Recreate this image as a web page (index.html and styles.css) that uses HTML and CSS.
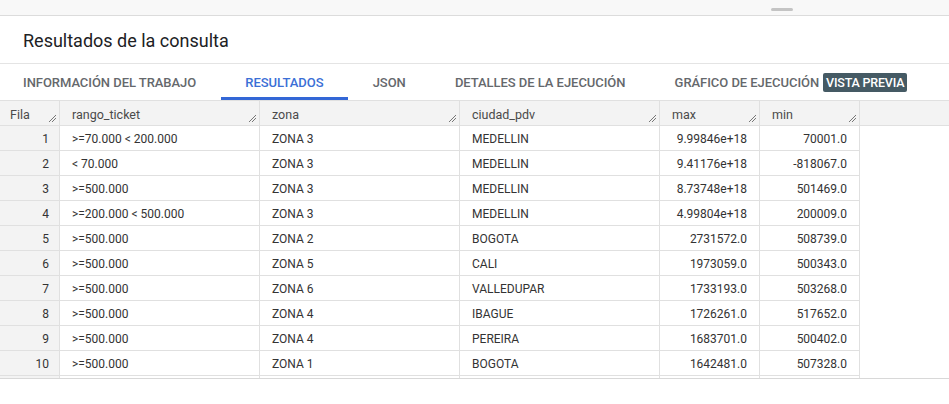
FILE: index.html
```html
<!DOCTYPE html>
<html lang="es">
<head>
<meta charset="utf-8">
<title>Resultados de la consulta</title>
<link rel="stylesheet" href="styles.css">
</head>
<body>
<div class="topbar"><span class="handle"></span></div>
<h1 class="title">Resultados de la consulta</h1>
<nav class="tabs">
  <span class="tab">INFORMACIÓN DEL TRABAJO</span>
  <span class="tab active">RESULTADOS</span>
  <span class="tab">JSON</span>
  <span class="tab">DETALLES DE LA EJECUCIÓN</span>
  <span class="tab">GRÁFICO DE EJECUCIÓN <span class="badge">VISTA PREVIA</span></span>
</nav>
<div class="grid">
  <div class="row head">
    <div class="c num">Fila</div>
    <div class="c w200">rango_ticket</div>
    <div class="c w200">zona</div>
    <div class="c w200">ciudad_pdv</div>
    <div class="c w100">max</div>
    <div class="c w100">min</div>
    <div class="c fill"></div>
  </div>
  <div class="row"><div class="c num">1</div><div class="c w200">&gt;=70.000 &lt; 200.000</div><div class="c w200">ZONA 3</div><div class="c w200">MEDELLIN</div><div class="c w100 r">9.99846e+18</div><div class="c w100 r">70001.0</div><div class="c fill"></div></div>
  <div class="row"><div class="c num">2</div><div class="c w200">&lt; 70.000</div><div class="c w200">ZONA 3</div><div class="c w200">MEDELLIN</div><div class="c w100 r">9.41176e+18</div><div class="c w100 r">-818067.0</div><div class="c fill"></div></div>
  <div class="row"><div class="c num">3</div><div class="c w200">&gt;=500.000</div><div class="c w200">ZONA 3</div><div class="c w200">MEDELLIN</div><div class="c w100 r">8.73748e+18</div><div class="c w100 r">501469.0</div><div class="c fill"></div></div>
  <div class="row"><div class="c num">4</div><div class="c w200">&gt;=200.000 &lt; 500.000</div><div class="c w200">ZONA 3</div><div class="c w200">MEDELLIN</div><div class="c w100 r">4.99804e+18</div><div class="c w100 r">200009.0</div><div class="c fill"></div></div>
  <div class="row"><div class="c num">5</div><div class="c w200">&gt;=500.000</div><div class="c w200">ZONA 2</div><div class="c w200">BOGOTA</div><div class="c w100 r">2731572.0</div><div class="c w100 r">508739.0</div><div class="c fill"></div></div>
  <div class="row"><div class="c num">6</div><div class="c w200">&gt;=500.000</div><div class="c w200">ZONA 5</div><div class="c w200">CALI</div><div class="c w100 r">1973059.0</div><div class="c w100 r">500343.0</div><div class="c fill"></div></div>
  <div class="row"><div class="c num">7</div><div class="c w200">&gt;=500.000</div><div class="c w200">ZONA 6</div><div class="c w200">VALLEDUPAR</div><div class="c w100 r">1733193.0</div><div class="c w100 r">503268.0</div><div class="c fill"></div></div>
  <div class="row"><div class="c num">8</div><div class="c w200">&gt;=500.000</div><div class="c w200">ZONA 4</div><div class="c w200">IBAGUE</div><div class="c w100 r">1726261.0</div><div class="c w100 r">517652.0</div><div class="c fill"></div></div>
  <div class="row"><div class="c num">9</div><div class="c w200">&gt;=500.000</div><div class="c w200">ZONA 4</div><div class="c w200">PEREIRA</div><div class="c w100 r">1683701.0</div><div class="c w100 r">500402.0</div><div class="c fill"></div></div>
  <div class="row"><div class="c num">10</div><div class="c w200">&gt;=500.000</div><div class="c w200">ZONA 1</div><div class="c w200">BOGOTA</div><div class="c w100 r">1642481.0</div><div class="c w100 r">507328.0</div><div class="c fill"></div></div>
  <div class="row stub"><div class="c num"></div><div class="c w200"></div><div class="c w200"></div><div class="c w200"></div><div class="c w100"></div><div class="c w100"></div><div class="c fill"></div></div>
</div>
</body>
</html>
```

FILE: styles.css
```css
* { box-sizing: border-box; }
html, body { margin: 0; padding: 0; background: #fff; }
body {
  font-family: Roboto, "Liberation Sans", Arial, sans-serif;
  color: #212121;
  width: 949px;
  height: 404px;
  overflow: hidden;
}
.topbar {
  height: 16px;
  background: #f8f8f8;
  border-bottom: 1px solid #dcdcdc;
  position: relative;
}
.handle {
  position: absolute;
  left: 771px;
  top: 8px;
  width: 22px;
  height: 3px;
  border-radius: 2px;
  background: #c4c4c4;
}
.title {
  margin: 0;
  height: 48px;
  padding: 14px 0 0 23px;
  font-size: 18px;
  font-weight: 400;
  color: #202124;
  border-bottom: 1px solid #e4e4e4;
  line-height: 22px;
}
.tabs {
  display: flex;
  height: 37px;
  border-bottom: 1px solid #e0e0e0;
}
.tab {
  display: flex;
  align-items: center;
  padding: 0 24.6px;
  font-size: 13px;
  font-weight: 500;
  color: #65686c;
  letter-spacing: -0.05px;
  border-bottom: 3px solid transparent;
  padding-top: 3px;
}
.tab:first-child { padding-left: 23px; }
.tab.active {
  color: #3b6fd6;
  border-bottom-color: #3367d6;
}
.badge {
  margin-left: 4px;
  background: #455a64;
  color: #fff;
  font-size: 12.5px;
  font-weight: 500;
  padding: 2px 3px;
  border-radius: 2px;
  letter-spacing: -0.2px;
  line-height: 15px;
}
.grid { display: flex; flex-direction: column; }
.row {
  display: flex;
  height: 25px;
  font-size: 12px;
}
.c {
  height: 25px;
  line-height: 26px;
  padding: 0 12px;
  border-right: 1px solid #e0e0e0;
  border-bottom: 1px solid #e0e0e0;
  white-space: nowrap;
  position: relative;
  color: #333;
}
.num {
  width: 60px;
  background: #f3f3f3;
  text-align: right;
  padding-right: 10px;
  color: #333;
}
.w200 { width: 200px; }
.w100 { width: 100px; }
.r { text-align: right; }
.fill { flex: 1; border-right: none; border-bottom: none; }
.head .c {
  background: #f3f3f3;
  color: #4a4a4a;
  font-size: 12.5px;
  line-height: 27px;
}
.head .num { text-align: left; padding-left: 10px; }
.head .fill { border-bottom: 1px solid #e0e0e0; }
.head .c:not(.fill)::after {
  content: "";
  position: absolute;
  right: 3px;
  bottom: 3px;
  width: 7px;
  height: 7px;
  background:
    linear-gradient(135deg, transparent 45%, #777 45%, #777 55%, transparent 55%) no-repeat;
}
.head .c:not(.fill)::before {
  content: "";
  position: absolute;
  right: 3px;
  bottom: 3px;
  width: 4px;
  height: 4px;
  background:
    linear-gradient(135deg, transparent 40%, #777 40%, #777 60%, transparent 60%) no-repeat;
}
.stub { height: 3px; border-bottom: 1px solid #d8d8d8; }
.stub .c { height: 2px; border-bottom: none; }
```
